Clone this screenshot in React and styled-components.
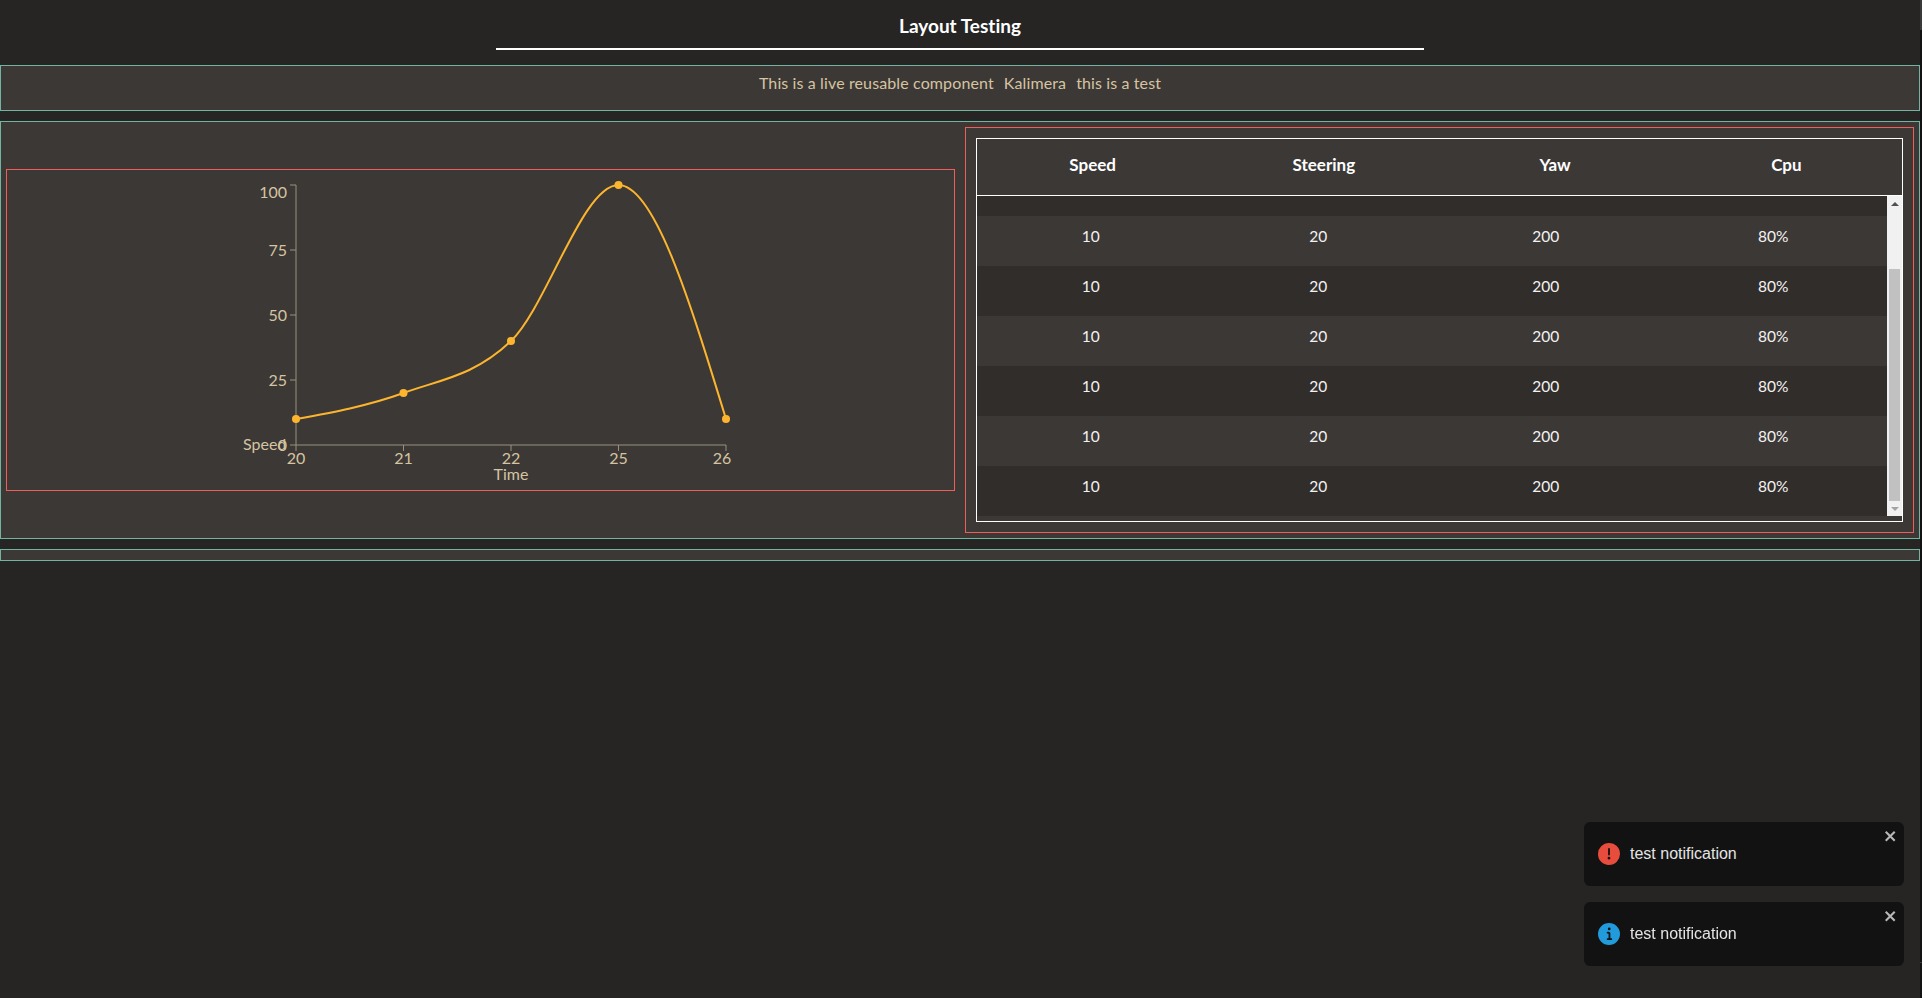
import styled, { createGlobalStyle } from "styled-components";

const GlobalStyle = createGlobalStyle`
  html, body {
    margin: 0;
    padding: 0;
    background: #262524;
  }
  body {
    min-height: 100vh;
    overflow: hidden;
    font-family: "Lato", "Noto Sans", sans-serif;
  }
`;

const Page = styled.div`
  display: flex;
  height: 100vh;
`;

const Container = styled.div`
  flex: 0 0 1920px;
  display: flex;
  flex-direction: column;
  font-variant-ligatures: none;
`;

const WindowEdge = styled.div`
  flex: 0 0 2px;
  background: linear-gradient(
    #3a3a3a 0 30px,
    #131313 30px 962px,
    #3a3a3a 962px 963px,
    #131313 963px
  );
`;

const Header = styled.header`
  height: 65px;
  box-sizing: border-box;
`;

const Title = styled.h1`
  width: 928px;
  height: 50px;
  box-sizing: border-box;
  margin: 0 auto;
  padding-top: 15px;
  border-bottom: 2px solid #ffffff;
  color: #ffffff;
  font-size: 19px;
  font-weight: 700;
  line-height: 22px;
  text-align: center;
`;

const Panel = styled.section`
  box-sizing: border-box;
  background: #3c3836;
  border: 1px solid #72b3a2;
`;

const LiveBar = styled(Panel)`
  height: 46px;
  padding-top: 5px;
  display: flex;
  justify-content: center;
  gap: 10px;
  color: #d5c4a1;
  font-size: 16px;
  letter-spacing: 0.12px;
  line-height: 24px;
`;

const Main = styled(Panel)`
  height: 418px;
  margin-top: 10px;
  padding: 5px;
  display: grid;
  grid-template-columns: 1fr 1fr;
  align-items: center;
  gap: 10px;
`;

const FooterBar = styled(Panel)`
  height: 12px;
  margin-top: 10px;
`;

const RedBox = styled.div`
  box-sizing: border-box;
  border: 1px solid #f05d5a;
`;

const ChartBox = styled(RedBox)`
  height: 322px;
  display: flex;
  justify-content: center;
`;

const TableBox = styled(RedBox)`
  height: 406px;
  padding: 10px;
`;

const Table = styled.div`
  height: 100%;
  box-sizing: border-box;
  border: 1px solid #ffffff;
`;

const HeadRow = styled.div`
  height: 57px;
  box-sizing: border-box;
  padding-bottom: 6px;
  display: grid;
  grid-template-columns: repeat(4, 1fr);
  align-items: center;
  border-bottom: 1px solid #ffffff;
`;

const HeadCell = styled.div`
  color: #ffffff;
  font-size: 17px;
  font-weight: 700;
  text-align: center;
`;

const Body = styled.div`
  height: 320px;
  display: flex;
`;

const RowList = styled.div`
  flex: 1;
`;

const TopStrip = styled.div`
  height: 20px;
  background: #312d2a;
`;

const Row = styled.div`
  height: 50px;
  box-sizing: border-box;
  padding-top: 10px;
  display: grid;
  grid-template-columns: repeat(4, 1fr);
  background: ${(p) => (p.$odd ? "#312d2a" : "#3c3836")};
`;

const Cell = styled.div`
  color: #f2f2f2;
  font-size: 15.5px;
  line-height: 20px;
  text-align: center;
`;

const Scrollbar = styled.div`
  width: 15px;
  display: flex;
  flex-direction: column;
  align-items: center;
  background: #f1f1f1;
`;

const ScrollArrow = styled.div`
  height: 15px;
  display: flex;
  align-items: center;
  justify-content: center;

  &::before {
    content: "";
    border-left: 4px solid transparent;
    border-right: 4px solid transparent;
    ${(p) => (p.$down ? "border-top: 4px solid #a3a3a3;" : "border-bottom: 4px solid #505050;")}
  }
`;

const ScrollTrack = styled.div`
  flex: 1;
  display: flex;
  align-items: flex-end;
`;

const ScrollThumb = styled.div`
  width: 11px;
  height: 232px;
  background: #c1c1c1;
`;

const AxisText = styled.text`
  fill: #d5c4a1;
  font-family: "Lato", "Noto Sans", sans-serif;
  font-size: 16px;
`;

const ToastStack = styled.div`
  position: fixed;
  right: 18px;
  bottom: 32px;
  width: 320px;
  display: flex;
  flex-direction: column;
  gap: 16px;
`;

const Toast = styled.div`
  position: relative;
  height: 64px;
  box-sizing: border-box;
  padding: 0 14px;
  display: flex;
  align-items: center;
  gap: 10px;
  background: #121212;
  border-radius: 6px;
  color: #e4e4e4;
  font-family: "Liberation Sans", Arial, sans-serif;
  font-size: 16px;
`;

const CloseButton = styled.button`
  position: absolute;
  top: 6px;
  right: 6px;
  padding: 0;
  border: 0;
  background: none;
  color: #ffffff;
  opacity: 0.7;
  display: flex;
`;

const rows = Array.from({ length: 6 }, () => ["10", "20", "200", "80%"]);

const points = [
  [296, 419],
  [403.5, 393],
  [511, 341],
  [618.5, 185],
  [726, 419],
];
const xTicks = [
  [296, 296, "20"],
  [403.5, 403.5, "21"],
  [511, 511, "22"],
  [618.5, 618.5, "25"],
  [726, 722, "26"],
];
const yTicks = [
  [185, 191, "100"],
  [250, 249, "75"],
  [315, 314, "50"],
  [380, 379, "25"],
  [445, 444, "0"],
];

// the svg starts at 180,170 of the page
const LineChart = () => (
  <svg width="601" height="320" viewBox="180 170 601 320">
    <g stroke="#98927c" fill="none">
      <path d="M296 185V445H726" />
      {yTicks.map(([y]) => (
        <path key={y} d={`M290 ${y}H296`} />
      ))}
      {xTicks.map(([x]) => (
        <path key={x} d={`M${x} 445V451`} />
      ))}
    </g>
    {yTicks.map(([, y, label]) => (
      <AxisText key={label} x="287" y={y} textAnchor="end" dominantBaseline="central">
        {label}
      </AxisText>
    ))}
    {xTicks.map(([, x, label]) => (
      <AxisText key={label} x={x} y="457" textAnchor="middle" dominantBaseline="central">
        {label}
      </AxisText>
    ))}
    <AxisText x="243" y="443" dominantBaseline="central">Speed</AxisText>
    <AxisText x="511" y="473" textAnchor="middle" dominantBaseline="central">Time</AxisText>
    <path
      d="M296 419C331.8 412.5 367.7 406 403.5 393C439.3 380 475.2 375.7 511 341C546.8 306.3 582.7 185 618.5 185C654.3 185 690.2 302 726 419"
      fill="none"
      stroke="#fdb52e"
      strokeWidth="2"
    />
    {points.map(([x, y]) => (
      <circle key={x} cx={x} cy={y} r="4" fill="#fdb52e" />
    ))}
  </svg>
);

const ErrorIcon = () => (
  <svg width="22" height="22" viewBox="0 0 24 24" fill="#e74c3c">
    <path d="M11.983 0a12.206 12.206 0 00-8.51 3.653A11.8 11.8 0 000 12.207 11.779 11.779 0 0011.8 24h.214A12.111 12.111 0 0024 11.791 11.766 11.766 0 0011.983 0zM10.5 16.542a1.476 1.476 0 011.449-1.53h.027a1.527 1.527 0 011.523 1.47 1.475 1.475 0 01-1.449 1.53h-.027a1.529 1.529 0 01-1.523-1.47zM11 12.5v-6a1 1 0 012 0v6a1 1 0 11-2 0z" />
  </svg>
);

const InfoIcon = () => (
  <svg width="22" height="22" viewBox="0 0 24 24" fill="#229bdc">
    <path d="M12 0a12 12 0 1012 12A12.013 12.013 0 0012 0zm.25 5a1.5 1.5 0 11-1.5 1.5 1.5 1.5 0 011.5-1.5zm2.25 13.5h-4a1 1 0 010-2h.75a.25.25 0 00.25-.25v-4.5a.25.25 0 00-.25-.25h-.75a1 1 0 010-2h1a2 2 0 012 2v4.75a.25.25 0 00.25.25h.75a1 1 0 110 2z" />
  </svg>
);

const CloseIcon = () => (
  <svg width="14" height="16" viewBox="0 0 14 16" fill="currentColor">
    <path d="M7.71 8.23l3.75 3.75-1.48 1.48-3.75-3.75-3.75 3.75L1 11.98l3.75-3.75L1 4.48 2.48 3l3.75 3.75L9.98 3l1.48 1.48-3.75 3.75z" />
  </svg>
);

const App = () => (
  <Page>
    <GlobalStyle />
    <Container>
      <Header>
        <Title>Layout Testing</Title>
      </Header>
      <LiveBar>
        <span>This is a live reusable component</span>
        <span>Kalimera</span>
        <span>this is a test</span>
      </LiveBar>
      <Main>
        <ChartBox>
          <LineChart />
        </ChartBox>
        <TableBox>
          <Table>
            <HeadRow>
              <HeadCell>Speed</HeadCell>
              <HeadCell>Steering</HeadCell>
              <HeadCell>Yaw</HeadCell>
              <HeadCell>Cpu</HeadCell>
            </HeadRow>
            <Body>
              <RowList>
                <TopStrip />
                {rows.map((row, i) => (
                  <Row key={i} $odd={i % 2 === 1}>
                    {row.map((value, j) => (
                      <Cell key={j}>{value}</Cell>
                    ))}
                  </Row>
                ))}
              </RowList>
              <Scrollbar>
                <ScrollArrow />
                <ScrollTrack>
                  <ScrollThumb />
                </ScrollTrack>
                <ScrollArrow $down />
              </Scrollbar>
            </Body>
          </Table>
        </TableBox>
      </Main>
      <FooterBar />
    </Container>
    <WindowEdge />
    <ToastStack>
      <Toast>
        <ErrorIcon />
        test notification
        <CloseButton><CloseIcon /></CloseButton>
      </Toast>
      <Toast>
        <InfoIcon />
        test notification
        <CloseButton><CloseIcon /></CloseButton>
      </Toast>
    </ToastStack>
  </Page>
);

export default App;
